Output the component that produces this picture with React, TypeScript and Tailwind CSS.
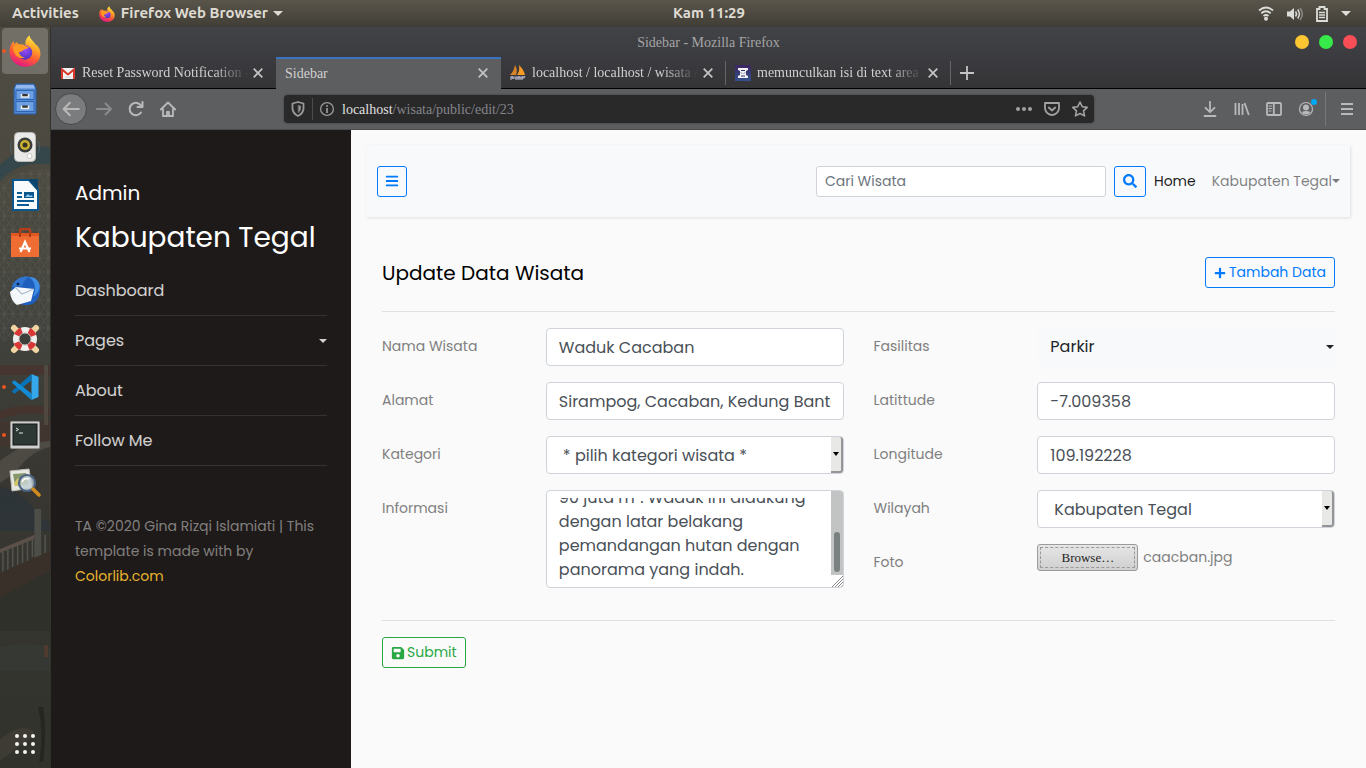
import { useEffect, useRef } from "react";
import type { ReactNode } from "react";
import { FaBars, FaPlus, FaSave, FaSearch } from "react-icons/fa";

const label = "pt-[7px] text-[14px] leading-[22px] text-[#808080]";
const field =
  "h-[38px] w-full min-w-0 rounded border border-[#ced4da] bg-white px-3 text-base text-[#495057] outline-none";
const toolButton = "flex h-8 w-8 shrink-0 items-center justify-center text-[#b9b9ba]";

function FirefoxLogo({ size }: { size: number }) {
  return (
    <svg width={size} height={size} viewBox="0 0 32 32" aria-hidden="true">
      <defs>
        <linearGradient id={`fx${size}`} x1="0.8" y1="0" x2="0.35" y2="1">
          <stop offset="0" stopColor="#fff44f" />
          <stop offset="0.35" stopColor="#ffa726" />
          <stop offset="0.65" stopColor="#ff5a36" />
          <stop offset="1" stopColor="#e31587" />
        </linearGradient>
        <radialGradient id={`globe${size}`} cx="0.5" cy="0.3" r="0.7">
          <stop offset="0" stopColor="#a04bff" />
          <stop offset="1" stopColor="#4a35b8" />
        </radialGradient>
      </defs>
      <path
        fill={`url(#fx${size})`}
        d="M20.5.5c.6 3.2 2.7 4.8 4.5 6.7l1.2 1.9c2.5 1.4 5.8 5.5 5.2 11C30.600 27.500 24 31.700 16.500 31.700 8 31.700.8 25.500.5 17 .4 12 2.200 8.400 4.800 6l.5 3.200L7.500 7c1 1.500 2 2.500 3.500 2.600 2-.3 4-.2 5.700.7-1-3.500.4-7.500 3.800-9.800Z"
      />
      <circle cx="16" cy="17.500" r="7.200" fill={`url(#globe${size})`} />
      <path
        fill="#ff9a22"
        d="M4 11.500c3-2.400 8-2.800 12-1 1 .8 2.500 1.200 4 1.400-.7 1.500-2.600 2-4.200 2.400-1.600.6-1.800 2.200-4 2.500l-2 .5c1 3 3 5 6 5.500-5 1-9.500-1.200-10.800-5.800C4 15 4.400 13 4 11.500Z"
      />
    </svg>
  );
}

function FilesIcon() {
  return (
    <svg width="24" height="32" viewBox="0 0 24 32">
      <path d="M3 1h18l2 5v25H1V6z" fill="#5288cf" stroke="#2a5ea9" />
      <path d="M3.500 2h17l1.500 3.500H2z" fill="#91b8ed" />
      <path d="M3 7.500h18v9H3zM3 18.500h18v10H3z" fill="#6da0e2" stroke="#2f66b4" />
      <path d="M8.500 11v3h7v-3M8.500 22.500v3h7v-3" fill="#333" stroke="#eee" strokeWidth="1.500" />
    </svg>
  );
}

function SpeakerIcon() {
  return (
    <svg width="32" height="32" viewBox="0 0 32 32">
      <path d="M3 10q-3 6 0 12M29 10q3 6 0 12" fill="none" stroke="#4f6472" strokeWidth="1.200" opacity=".7" />
      <rect x="5.500" y="1.500" width="21" height="29" rx="4" fill="#e9e9e7" stroke="#b9b9b5" />
      <circle cx="16" cy="14" r="7.500" fill="#3b3d3b" />
      <circle cx="16" cy="14" r="5" fill="#cdb130" />
      <circle cx="16" cy="14" r="2.500" fill="#353424" />
      <circle cx="20.500" cy="25" r="2.500" fill="#fff" stroke="#c8c8c8" />
    </svg>
  );
}

function WriterIcon() {
  return (
    <svg width="28" height="32" viewBox="0 0 28 32">
      <path d="M2 1h16l9 10v20H2z" fill="#f8fafb" stroke="#0b578d" strokeWidth="2" />
      <path d="M17 0h10v11z" fill="#0d446b" />
      <path d="M6 14h5M6 18h5M6 22h17M6 26h12" stroke="#0b5c94" strokeWidth="2" />
      <path d="M13 13h10v6H13z" fill="#0b578d" />
      <path d="m14 18 3-3 2 2 1-1 2 2z" fill="#8fcaf2" />
    </svg>
  );
}

function SoftwareIcon() {
  return (
    <svg width="28" height="30" viewBox="0 0 28 30">
      <path d="M9 7V3q0-2 2-2h6q2 0 2 2v4" fill="none" stroke="#b53d18" strokeWidth="2.500" />
      <path d="M0 5h28v24H0z" fill="#ef6c33" />
      <path d="M0 5h28v3H0z" fill="#e2561f" />
      <path d="M9 5v4M19 5v4" stroke="#a93815" strokeWidth="2" />
      <path d="m9.500 24 4.500-10 4.500 10M8 20.500h12" fill="none" stroke="#fff" strokeWidth="2.200" />
    </svg>
  );
}

function MailIcon() {
  return (
    <svg width="32" height="32" viewBox="0 0 32 32">
      <path d="M3 12C5 4 14 0 22 2c6 2 9 7 9 13 0 10-7 16-14 15C9 30 0 22 3 12Z" fill="#1f5fbd" />
      <path d="M20 2c6 4 8 11 4 20 5-3 8-9 6-14-2-4-5-6-10-6Z" fill="#3f8ee5" />
      <path d="m1 17 6-5 18 2-3 12-14 4q-6-4-7-13Z" fill="#f5f8fb" />
      <path d="m6 12 7 7 12-5" fill="none" stroke="#aebccb" strokeWidth="1.200" />
      <path d="M3 12C5 4 14 0 21 2c-4 1-6 4-8 9z" fill="#3276d2" />
      <circle cx="9" cy="9" r="1.500" fill="#0d2855" />
    </svg>
  );
}

function HelpIcon() {
  return (
    <svg width="30" height="30" viewBox="0 0 30 30">
      <path d="m4 4 22 22M26 4 4 26" stroke="#f1d5a2" strokeWidth="6" strokeLinecap="round" />
      <circle cx="15" cy="15" r="12" fill="#efefed" />
      <circle cx="15" cy="15" r="9" fill="none" stroke="#d93636" strokeWidth="6" strokeDasharray="7 7.137" strokeDashoffset="-3.600" />
      <circle cx="15" cy="15" r="6" fill="#3e3f3a" stroke="#b9b9b5" />
    </svg>
  );
}

function CodeIcon() {
  return (
    <svg width="28" height="28" viewBox="0 0 28 28">
      <path d="m20.500 1 7 3v20l-7 3z" fill="#35a8ec" />
      <path d="m.7 18.500 2.600 2.300L20.500 7.500V1z" fill="#0872b7" />
      <path d="m.7 9.500 2.600-2.300 17.200 13.300V27z" fill="#138cd6" />
    </svg>
  );
}

function TerminalIcon() {
  return (
    <svg width="30" height="28" viewBox="0 0 30 28">
      <rect x=".5" y=".5" width="29" height="27" rx="1" fill="#cfcfcd" stroke="#91918e" />
      <rect x="3" y="3" width="24" height="21" fill="#2d3734" stroke="#151918" />
      <path d="m6 7 2.500 1.500L6 10M9 12h4" fill="none" stroke="#e7ebe9" />
    </svg>
  );
}

function ViewerIcon() {
  return (
    <svg width="32" height="32" viewBox="0 0 32 32">
      <path d="m1 4 19-2 3 19-20 3z" fill="#e8e8e3" stroke="#bcbcb6" />
      <path d="m4 7 13-1 2 11-13 2z" fill="#86976b" />
      <path d="m5 16 4-5 4 4 4-6 2 8-13 2z" fill="#d6c66b" />
      <circle cx="18" cy="16" r="8" fill="#bdcdd3" fillOpacity=".8" stroke="#4b6484" strokeWidth="2.200" />
      <path d="M13 15q2-5 7-3" fill="none" stroke="#fff" strokeWidth="1.500" />
      <path d="m24 22 6 6" stroke="#d18b20" strokeWidth="3.500" strokeLinecap="round" />
    </svg>
  );
}

const launchers: { name: string; icon: ReactNode; running?: boolean; active?: boolean }[] = [
  { name: "Firefox", icon: <FirefoxLogo size={32} />, running: true, active: true },
  { name: "Files", icon: <FilesIcon /> },
  { name: "Rhythmbox", icon: <SpeakerIcon /> },
  { name: "Writer", icon: <WriterIcon /> },
  { name: "Software", icon: <SoftwareIcon /> },
  { name: "Thunderbird", icon: <MailIcon /> },
  { name: "Help", icon: <HelpIcon /> },
  { name: "Code", icon: <CodeIcon />, running: true },
  { name: "Terminal", icon: <TerminalIcon />, running: true },
  { name: "Image Viewer", icon: <ViewerIcon /> },
];

function Wallpaper() {
  return (
    <svg className="absolute inset-0 h-full w-full" viewBox="0 0 51 741" preserveAspectRatio="none" aria-hidden="true">
      <defs>
        <linearGradient id="sky" x1="0" y1="0" x2="0" y2="1">
          <stop offset="0" stopColor="#4f4b42" />
          <stop offset=".18" stopColor="#4c4a40" />
          <stop offset=".4" stopColor="#42433e" />
          <stop offset=".6" stopColor="#383732" />
          <stop offset="1" stopColor="#32322c" />
        </linearGradient>
        <pattern id="truss" width="9" height="14" patternUnits="userSpaceOnUse">
          <path d="m0 0 9 14M9 0 0 14M4 0v14M0 7h9" stroke="#64645d" strokeWidth=".6" fill="none" />
        </pattern>
      </defs>
      <path d="M0 0h51v741H0z" fill="url(#sky)" />
      <path d="M0 138q22-22 51-18v18q-30-6-51 16z" fill="#35474b" />
      <path d="M0 160q20-22 51-16v170H0z" fill="url(#truss)" opacity=".6" />
      <g opacity=".6">
        <path d="M0 338h51v10H0zM0 384q20-8 51-4v8q-28-4-51 4z" fill="#4c2f29" />
        <path d="M0 394h51v26H0z" fill="#46332c" />
        <path d="M45 338h4v60h-4z" fill="#5c5146" />
        <path d="M0 434q22-18 51-20v6q-20 4-36 26l-15 10z" fill="#5a574e" />
        <path d="M0 460q26 4 40 30l11 6v8H0z" fill="#28333c" />
      </g>
      <path d="M35 482h7v50h-7z" fill="#4d4e48" />
      <path d="M0 522 35 508v4L0 526z" fill="#5b5149" />
      <path d="M3 525v20M8 523v20M13 520v20M18 518v20M23 516v20M28 514v20M33 512v18M46 508v18" stroke="#55554e" strokeWidth="1.500" />
      <path d="M0 546 51 524v20L0 570z" fill="#39302a" />
      <path d="M0 570 51 544v60H0z" fill="#30302b" />
      <path d="M0 620q25-6 51 0v24H0z" fill="#373c37" opacity=".5" />
      <path d="M0 712q18-14 30-10t-6 14L0 734z" fill="#3d3b34" />
      <path d="M39 680q6 26 1 55h4q4-30 0-55z" fill="#262621" />
      <path d="M45 618h4v12h-4z" fill="#6b3d2b" opacity=".5" />
    </svg>
  );
}

function CloseIcon() {
  return (
    <svg width="10" height="10" viewBox="0 0 10 10" aria-hidden="true">
      <path d="m.7.7 8.600 8.600M9.300.7.7 9.300" stroke="currentColor" strokeWidth="1.700" />
    </svg>
  );
}

function Tab({ title, icon, active, divided }: { title: string; icon?: ReactNode; active?: boolean; divided?: boolean }) {
  return (
    <div
      className={
        "relative flex h-8 w-[225px] items-center pr-[13px] pl-[9px] " +
        (active ? "bg-[#5d5e60] shadow-[inset_0_2px_#3a72c4]" : "border-b border-black")
      }
    >
      <button className="flex min-w-0 flex-1 items-center gap-[6px] text-left text-[14px] text-[#d0d0d0]">
        {icon}
        <span
          className={
            "flex-1 overflow-hidden whitespace-nowrap " +
            (active ? "" : "[mask-image:linear-gradient(to_right,black_calc(100%-36px),transparent)]")
          }
        >
          {title}
        </span>
      </button>
      <button aria-label="Close tab" className="ml-1 text-[#c4c4c5]">
        <CloseIcon />
      </button>
      {divided && <span className="absolute top-1 right-0 h-6 w-px bg-[#656568]" />}
    </div>
  );
}

function GmailIcon() {
  return (
    <svg width="16" height="16" viewBox="0 0 16 16" className="shrink-0">
      <path d="M1 3h14v11H1z" fill="#f2f2f2" />
      <path d="M2 14V4.500l6 5 6-5V14" fill="none" stroke="#d8392b" strokeWidth="2" />
      <path d="m4 13 4-3 4 3z" fill="#dedede" />
    </svg>
  );
}

function SailIcon() {
  return (
    <svg width="16" height="16" viewBox="0 0 16 16" className="shrink-0">
      <path d="M5 0q3 5 1 10H0Q4 6 5 0Z" fill="#d9832a" />
      <path d="M9 0q5 5 6 10H7q3-4 2-10Z" fill="#f59a25" />
      <path d="M0 11h16l-2 3H2z" fill="#6f707c" />
      <path d="M1 15V12h2v2M6 12v3M8 15v-3h2v3M12 15v-3h3" fill="none" stroke="#c2c3d7" />
    </svg>
  );
}

function ForumIcon() {
  return (
    <svg width="16" height="16" viewBox="0 0 16 16" className="shrink-0">
      <defs>
        <linearGradient id="forum" x1="0" y1="0" x2="0" y2="1">
          <stop offset="0" stopColor="#3b2560" />
          <stop offset="1" stopColor="#34508c" />
        </linearGradient>
      </defs>
      <path d="M0 0h16v16H0z" fill="url(#forum)" />
      <path d="M3 3h10v2l-2 1v4l2 1v2H3v-2l2-1V6L3 5z" fill="#f2f2f5" />
      <path d="m6 5.500 4 0M6 7.500l1 1M10 7.500l-1 1M6 11h4" stroke="#33326d" />
    </svg>
  );
}

function Caret({ className = "" }: { className?: string }) {
  return (
    <svg width="8" height="4" viewBox="0 0 8 4" className={className} aria-hidden="true">
      <path d="M0 0h8L4 4z" fill="currentColor" />
    </svg>
  );
}

function Stroke({ children, size = 16 }: { children: ReactNode; size?: number }) {
  return (
    <svg width={size} height={size} viewBox="0 0 16 16" fill="none" stroke="currentColor" strokeWidth="1.800" strokeLinecap="round" strokeLinejoin="round" className="shrink-0" aria-hidden="true">
      {children}
    </svg>
  );
}

function TopBar() {
  return (
    <header className="grid h-[27px] shrink-0 grid-cols-3 items-center bg-linear-to-b from-[#59554b] to-[#413e37] px-3 font-['Ubuntu','Noto_Sans',sans-serif] text-[15px] font-bold text-[#dfdbd2]">
      <div className="flex items-center gap-5">
        <button>Activities</button>
        <button className="flex items-center gap-[6px] whitespace-nowrap">
          <FirefoxLogo size={16} />
          Firefox Web Browser
          <svg width="10" height="5" viewBox="0 0 10 5" className="-ml-px">
            <path d="M0 0h10L5 5z" fill="currentColor" />
          </svg>
        </button>
      </div>
      <button className="justify-self-center pl-[52px]">Kam 11:29</button>
      <div className="flex items-center justify-end gap-[13px] pr-[3px]">
        <svg width="16" height="15" viewBox="0 0 16 15" fill="none" stroke="#dcdcd8" strokeWidth="1.800">
          <path d="M1 4.500q7-6 14 0M3.300 7.300q4.700-4 9.400 0M5.500 10q2.500-2 5 0" />
          <circle cx="8" cy="12.700" r="1.100" fill="#dcdcd8" />
        </svg>
        <svg width="16" height="14" viewBox="0 0 16 14" fill="none" stroke="#dcdcd8" strokeWidth="1.500">
          <path d="M0 4.500h3L7 1v12L3 9.500H0z" fill="#dcdcd8" stroke="none" />
          <path d="M8.500 4.500q2 2.500 0 5M10.700 2.500q3.400 4.500 0 9" />
          <path d="M13 1q4.500 6 0 12" stroke="#8d8a82" />
        </svg>
        <svg width="12" height="16" viewBox="0 0 12 16" fill="none" stroke="#dcdcd8">
          <path d="M1 3h2.500V1h5v2H11v12H1z" strokeWidth="1.800" />
          <path d="M3 6.500h6M3 9h6M3 11.500h6" strokeWidth="1.300" />
        </svg>
        <svg width="10" height="5" viewBox="0 0 10 5">
          <path d="M0 0h10L5 5z" fill="#dcdcd8" />
        </svg>
      </div>
    </header>
  );
}

function Dock() {
  return (
    <nav aria-label="Dock" className="relative flex w-[51px] shrink-0 flex-col border-r border-[#33312c]">
      <Wallpaper />
      {launchers.map((app) => (
        <div key={app.name} className="relative flex h-12 items-center px-[2px]">
          <button
            aria-label={app.name}
            className={"flex h-[46px] w-[46px] items-center justify-center rounded " + (app.active ? "bg-white/20" : "")}
          >
            {app.icon}
          </button>
          {app.running && <span className="absolute left-[2px] h-1 w-1 rounded-full bg-[#e95420]" />}
        </div>
      ))}
      <button aria-label="Show applications" className="relative mt-auto flex h-12 items-center justify-center">
        <svg width="20" height="20" viewBox="0 0 20 20" fill="#f3f3f1">
          {[2, 10, 18].map((y) => [2, 10, 18].map((x) => <circle key={`${x}-${y}`} cx={x} cy={y} r="2" />))}
        </svg>
      </button>
    </nav>
  );
}

function BrowserChrome() {
  return (
    <div className="font-['Liberation_Serif',serif]">
      <div className="bg-linear-to-b from-[#424347] to-[#343437]">
        <div className="relative flex h-[30px] items-center justify-center text-[14px] text-[#a5a5a6]">
          Sidebar - Mozilla Firefox
          <div className="absolute right-[9px] flex gap-[10px]">
            <button aria-label="Minimize" className="h-[14px] w-[14px] rounded-full bg-[#fdc532]" />
            <button aria-label="Maximize" className="h-[14px] w-[14px] rounded-full bg-[#38ea49]" />
            <button aria-label="Close" className="h-[14px] w-[14px] rounded-full bg-[#f94e55]" />
          </div>
        </div>
        <div className="flex h-8">
          <Tab title="Reset Password Notification -" icon={<GmailIcon />} />
          <Tab title="Sidebar" active />
          <Tab title="localhost / localhost / wisata /" icon={<SailIcon />} divided />
          <Tab title="memunculkan isi di text area" icon={<ForumIcon />} divided />
          <div className="flex flex-1 items-center border-b border-black">
            <button aria-label="New tab" className="pl-[9px] text-[#c4c4c5]">
              <svg width="14" height="14" viewBox="0 0 14 14">
                <path d="M7 0v14M0 7h14" stroke="currentColor" strokeWidth="1.800" />
              </svg>
            </button>
          </div>
        </div>
      </div>
      <div className="flex h-[41px] items-center border-b border-[#4b4c4e] bg-[#5d5e60] pr-[3px] pl-1">
        <button aria-label="Back" className={toolButton + " rounded-full border border-[#48494b] bg-[#7b7c7e]"}>
          <Stroke size={18}>
            <path d="M15 8H1.500M7 2.500 1.500 8 7 13.500" />
          </Stroke>
        </button>
        <button aria-label="Forward" className={toolButton + " ml-px opacity-50"}>
          <Stroke>
            <path d="M.8 8h14M9.500 2.500 15 8l-5.500 5.500" />
          </Stroke>
        </button>
        <button aria-label="Reload" className={toolButton}>
          <Stroke>
            <path d="M13 11.500A6.200 6.200 0 1 1 13.300 5M14.500 1v5h-5" strokeWidth="2" />
          </Stroke>
        </button>
        <button aria-label="Home" className={toolButton}>
          <Stroke>
            <path d="m.8 8.500 7.200-7 7.200 7M3 8v7h10V8M7 14.500V11h2v3.500" />
          </Stroke>
        </button>
        <div className="mx-[100px] flex h-7 min-w-0 flex-1 items-center rounded bg-[#29292a] px-[6px] text-[#9a9a9a] shadow-[0_0_2px_#333]">
          <Stroke>
            <path d="M8 1 13.500 2.500V8q-1 5-5.500 7Q3.500 13 2.500 8V2.500z" />
            <path d="M8.500 4.500 10.500 5v3.500l-2 3z" fill="currentColor" strokeWidth="0.500" />
          </Stroke>
          <span className="ml-[6px] h-[22px] w-px bg-[#4c4c4d]" />
          <svg width="16" height="16" viewBox="0 0 16 16" className="ml-[6px] shrink-0">
            <circle cx="8" cy="8" r="6.400" fill="none" stroke="currentColor" strokeWidth="1.300" />
            <path d="M8 4v1.800M8 7v5" stroke="currentColor" strokeWidth="1.700" />
          </svg>
          <span className="ml-[7px] flex-1 text-[14px] text-[#85858a]">
            <span className="text-[#e0e0e0]">localhost</span>/wisata/public/edit/23
          </span>
          <div className="flex items-center gap-3 text-[#a2a2a2]">
            <svg width="16" height="16" viewBox="0 0 16 16" fill="currentColor">
              <circle cx="2" cy="8" r="2" />
              <circle cx="8" cy="8" r="2" />
              <circle cx="14" cy="8" r="2" />
            </svg>
            <Stroke>
              <path d="M1 2h14v5a7 7 0 0 1-14 0zM4.800 6.500 8 9.500l3.200-3" />
            </Stroke>
            <Stroke>
              <path d="m8 1 2.200 4.700 5 .7-3.700 3.500 1 5L8 12.500l-4.500 2.400 1-5L.8 6.400l5-.7z" strokeWidth="1.600" />
            </Stroke>
          </div>
        </div>
        <button aria-label="Downloads" className={toolButton}>
          <Stroke>
            <path d="M8 .8v10M3.500 6.800 8 11.200l4.500-4.400M2.500 15h11" />
          </Stroke>
        </button>
        <button aria-label="Library" className={toolButton}>
          <Stroke>
            <path d="M1.500 2v12M5 2v12M8.500 3v11M10.500 2l4.300 12" strokeLinecap="butt" />
          </Stroke>
        </button>
        <button aria-label="Sidebars" className={toolButton}>
          <Stroke>
            <path d="M2 2h12q1 0 1 1v10q0 1-1 1H2q-1 0-1-1V3q0-1 1-1ZM7.800 2v12" />
            <path d="M3 5h2.500M3 7.500h2.500M3 10h2" strokeWidth="1" />
          </Stroke>
        </button>
        <button aria-label="Account" className={toolButton + " relative"}>
          <svg width="16" height="16" viewBox="0 0 16 16" fill="currentColor">
            <circle cx="8" cy="8" r="6.500" fill="none" stroke="currentColor" strokeWidth="1.200" />
            <circle cx="8" cy="6.500" r="3" />
            <path d="M3.500 11q4.500-2 9 0-1.500 2.500-4.500 2.500T3.500 11Z" />
          </svg>
          <span className="absolute top-[6px] right-[5px] h-[6px] w-[6px] rounded-full bg-[#00a9f4]" />
        </button>
        <span className="mr-[5px] ml-[3px] h-[34px] w-px bg-[#77787a]" />
        <button aria-label="Menu" className={toolButton}>
          <svg width="12" height="12" viewBox="0 0 12 12">
            <path d="M0 1h12M0 6h12M0 11h12" stroke="currentColor" strokeWidth="1.800" />
          </svg>
        </button>
      </div>
    </div>
  );
}

function Sidebar() {
  return (
    <aside className="w-[300px] shrink-0 bg-[#1e1a19] px-6 pt-[50px] text-white">
      <p className="text-[20px] leading-[26px]">Admin</p>
      <h1 className="mt-[14px] text-[28px] leading-9 whitespace-nowrap">Kabupaten Tegal</h1>
      <ul className="mt-[10px] text-base text-white/80">
        {["Dashboard", "Pages", "About", "Follow Me"].map((item) => (
          <li key={item} className="h-[50px] border-b border-white/10">
            <a href="#" className="flex h-full items-center justify-between">
              {item}
              {item === "Pages" && <Caret />}
            </a>
          </li>
        ))}
      </ul>
      <p className="mt-12 text-[14px] leading-[25px] text-white/45">
        TA ©2020 Gina Rizqi Islamiati | This
        <br />
        template is made with by
        <br />
        <a href="#" className="text-[#e8b42f]">
          Colorlib.com
        </a>
      </p>
    </aside>
  );
}

function Row({ id, text, children }: { id: string; text: string; children: ReactNode }) {
  return (
    <div className="grid grid-cols-3 gap-x-[30px]">
      <label htmlFor={id} className={label}>
        {text}
      </label>
      <div className="col-span-2 min-w-0">{children}</div>
    </div>
  );
}

function SelectField({ id, options }: { id: string; options: string[] }) {
  return (
    <div className="relative">
      <select id={id} className={field + " appearance-none pt-px pl-4"}>
        {options.map((option) => (
          <option key={option}>{option}</option>
        ))}
      </select>
      <span className="pointer-events-none absolute inset-y-px right-px flex w-3 items-center justify-center rounded-r-[3px] border-r-2 border-b-2 border-[#959597] bg-[#e8e8e7] text-black">
        <svg width="6" height="4" viewBox="0 0 6 4">
          <path d="M0 0h6L3 4z" fill="currentColor" />
        </svg>
      </span>
    </div>
  );
}

function InfoField() {
  const ref = useRef<HTMLTextAreaElement>(null);
  useEffect(() => {
    if (ref.current) ref.current.scrollTop = ref.current.scrollHeight;
  }, []);
  return (
    <div className="flex h-[98px] overflow-hidden rounded border border-[#ced4da] bg-white">
      <textarea
        ref={ref}
        id="informasi"
        className="mt-[7px] mb-[5px] min-w-0 flex-1 resize-none [scrollbar-width:none] pl-3 text-base leading-6 text-[#495057] outline-none"
        defaultValue={
          "90 juta m³. Waduk ini didukung\ndengan latar belakang\npemandangan hutan dengan\npanorama yang indah."
        }
      />
      <div className="flex w-3 flex-col bg-[#c2c3c3]">
        <span className="mx-[3px] mt-[41px] h-10 rounded-full bg-[#7b8181]" />
        <svg width="12" height="12" viewBox="0 0 12 12" className="mt-auto bg-white">
          <path d="M1 12 12 1M4 12l8-8M7 12l5-5M10 12l2-2" stroke="#888" />
        </svg>
      </div>
    </div>
  );
}

function Main() {
  return (
    <main className="min-w-0 flex-1 bg-[#fafafa] p-[15px] pr-4">
      <nav className="flex h-[72px] items-center bg-[#f8f9fb] px-[11px] pr-[10px] shadow-[1px_1px_3px_rgba(0,0,0,0.1)]">
        <button
          aria-label="Toggle menu"
          className="flex h-[31px] w-[30px] items-center justify-center rounded-[3px] border border-[#007bff] text-[#007bff]"
        >
          <FaBars size={14} />
        </button>
        <form className="ml-auto flex gap-2" onSubmit={(e) => e.preventDefault()}>
          <input
            aria-label="Cari Wisata"
            placeholder="Cari Wisata"
            className="h-[31px] w-[290px] rounded-[3px] border border-[#ced4da] bg-white px-2 text-[14px] outline-none placeholder:text-[#6c757d]"
          />
          <button
            aria-label="Search"
            className="flex h-[31px] w-8 items-center justify-center rounded-[3px] border border-[#007bff] text-[#007bff]"
          >
            <FaSearch size={14} />
          </button>
        </form>
        <a href="#" className="ml-2 text-[14px] text-black/90">
          Home
        </a>
        <a href="#" className="ml-4 flex items-center text-[14px] text-black/50">
          Kabupaten Tegal
          <Caret />
        </a>
      </nav>

      <section className="mt-10 pr-[15px] pl-4">
        <div className="flex h-[31px] items-center justify-between">
          <h2 className="text-[20px] leading-7 text-black">Update Data Wisata</h2>
          <button className="flex h-[31px] items-center gap-[3px] rounded-[3px] border border-[#007bff] px-2 text-[14px] text-[#007bff]">
            <FaPlus size={12} />
            Tambah Data
          </button>
        </div>
        <hr className="mt-[23px] mb-4 border-black/10" />
        <form onSubmit={(e) => e.preventDefault()}>
          <div className="grid grid-cols-2 gap-x-[30px]">
            <div className="flex flex-col gap-4">
              <Row id="nama" text="Nama Wisata">
                <input id="nama" className={field} defaultValue="Waduk Cacaban" />
              </Row>
              <Row id="alamat" text="Alamat">
                <input id="alamat" className={field} defaultValue="Sirampog, Cacaban, Kedung Banteng" />
              </Row>
              <Row id="kategori" text="Kategori">
                <SelectField id="kategori" options={["* pilih kategori wisata *"]} />
              </Row>
              <Row id="informasi" text="Informasi">
                <InfoField />
              </Row>
            </div>
            <div className="flex flex-col gap-4">
              <Row id="fasilitas" text="Fasilitas">
                <button
                  id="fasilitas"
                  type="button"
                  className="flex h-[38px] w-full items-center justify-between rounded bg-[#f8f9fb] pl-[13px] text-base text-[#212529]"
                >
                  Parkir
                  <Caret className="mr-px" />
                </button>
              </Row>
              <Row id="lat" text="Latittude">
                <input id="lat" className={field} defaultValue="-7.009358" />
              </Row>
              <Row id="long" text="Longitude">
                <input id="long" className={field} defaultValue="109.192228" />
              </Row>
              <Row id="wilayah" text="Wilayah">
                <SelectField id="wilayah" options={["Kabupaten Tegal"]} />
              </Row>
              <Row id="foto" text="Foto">
                <div className="flex items-center gap-[5px]">
                  <input id="foto" type="file" className="sr-only" />
                  <label
                    htmlFor="foto"
                    className="h-[27px] w-[101px] rounded-[3px] border border-[#9b9b9b] bg-linear-to-b from-[#e6e6e6] to-[#cfcfcf] p-[2px]"
                  >
                    <span className="flex h-full items-center justify-center border border-dashed border-[#999] font-['Liberation_Serif',serif] text-[13px] text-[#222]">
                      Browse…
                    </span>
                  </label>
                  <span className="text-[14px] text-[#808080]">caacban.jpg</span>
                </div>
              </Row>
            </div>
          </div>
          <hr className="mt-8 mb-4 border-black/10" />
          <button className="flex h-[31px] items-center gap-[2px] rounded-[3px] border border-[#28a745] px-2 text-[14px] text-[#28a745]">
            <FaSave size={14} />
            Submit
          </button>
        </form>
      </section>
    </main>
  );
}

export default function App() {
  return (
    <div className="flex min-h-screen flex-col overflow-hidden bg-[#1e1a19]">
      <TopBar />
      <div className="flex flex-1">
        <Dock />
        <div className="flex min-w-0 flex-1 flex-col">
          <BrowserChrome />
          <div className="flex flex-1 font-['Poppins','Inter',sans-serif]">
            <Sidebar />
            <Main />
          </div>
        </div>
      </div>
    </div>
  );
}
